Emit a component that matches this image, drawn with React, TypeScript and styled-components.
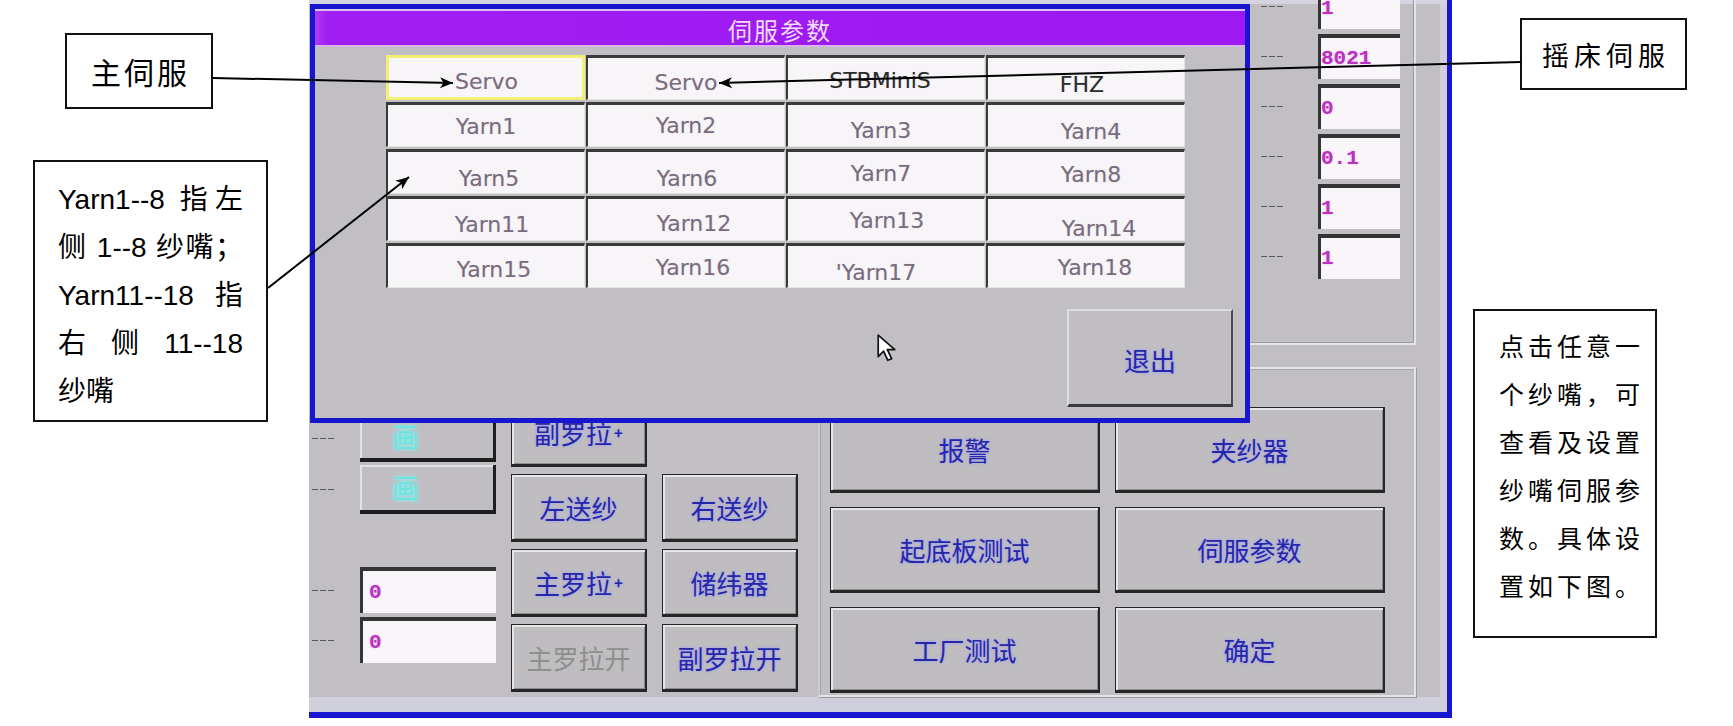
import React from 'react';
import styled, { createGlobalStyle } from 'styled-components';

const GlobalStyle = createGlobalStyle`
  html, body { margin: 0; padding: 0; background: #fff; }
  body { font-family: "Noto Sans CJK SC", sans-serif; }
  * { box-sizing: border-box; }
`;

const BLUE = '#1616cf';
const GRAY = '#c1bfc3';

const Page = styled.div`
  position: relative;
  display: flex;
  width: 1733px;
  height: 726px;
  overflow: hidden;
  background: #fff;
`;

/* ---------- annotations ---------- */

const LeftNotes = styled.div`
  width: 309px;
  flex-shrink: 0;
  display: flex;
  flex-direction: column;
  align-items: flex-start;
  padding-top: 33px;
`;

const RightNotes = styled.div`
  flex: 1;
  display: flex;
  flex-direction: column;
  align-items: flex-start;
  padding-top: 18px;
`;

const NoteBox = styled.div<{ $w: number; $h: number; $ml: number; $mt?: number }>`
  width: ${p => p.$w}px;
  height: ${p => p.$h}px;
  margin-left: ${p => p.$ml}px;
  margin-top: ${p => p.$mt ?? 0}px;
  border: 2px solid #111;
  background: #fff;
  color: #000;
`;

const NoteLabel = styled(NoteBox)<{ $size: number; $ls: number }>`
  display: flex;
  align-items: center;
  justify-content: center;
  font-size: ${p => p.$size}px;
  letter-spacing: ${p => p.$ls}px;
  padding-left: ${p => p.$ls}px;
  font-family: "Noto Sans CJK SC", sans-serif;
`;

const NoteText = styled(NoteBox)`
  padding: 14px 23px 0 23px;
  font-family: "Liberation Sans", "Noto Sans CJK SC", sans-serif;
  font-size: 28px;
  line-height: 48px;
`;

const NoteLine = styled.div<{ $spread?: boolean }>`
  white-space: nowrap;
  text-align: ${p => (p.$spread ? 'justify' : 'left')};
  text-align-last: ${p => (p.$spread ? 'justify' : 'left')};
`;

const TipText = styled(NoteBox)`
  padding: 10px 0 0 24px;
  font-family: "Noto Sans CJK SC", sans-serif;
  font-size: 25px;
  letter-spacing: 4px;
  line-height: 48px;
`;

const ArrowLayer = styled.svg`
  position: absolute;
  left: 0;
  top: 0;
  width: 1733px;
  height: 726px;
  pointer-events: none;
`;

/* ---------- machine screen ---------- */

const Screen = styled.div`
  position: relative;
  width: 1143px;
  height: 718px;
  flex-shrink: 0;
  overflow: hidden;
  background: ${GRAY};
  border-right: 5px solid ${BLUE};
  border-bottom: 6px solid ${BLUE};
  box-shadow: inset 0 4px 0 #d6d4e2, inset -7px 0 0 #d0cfdb, inset 0 -15px 0 #cfcedb,
    inset 0 -13px 0 #dcdce6;
`;

const Panel = styled.div`
  display: flex;
  height: 100%;
`;

const LeftCol = styled.div`
  width: 187px;
  flex-shrink: 0;
  display: flex;
  flex-direction: column;
  padding-top: 415px;
`;

const SideRow = styled.div<{ $mt: number }>`
  display: flex;
  align-items: center;
  margin-top: ${p => p.$mt}px;
  padding-left: 3px;
`;

const Dash = styled.div<{ $w: number; $gap: number }>`
  width: ${p => p.$w}px;
  height: 1px;
  margin-right: ${p => p.$gap}px;
  background: repeating-linear-gradient(90deg, #5a5a5a 0 6px, transparent 6px 8px);
`;

const CyanKey = styled.div<{ $h: number }>`
  width: 136px;
  height: ${p => p.$h}px;
  display: flex;
  align-items: center;
  padding-left: 32px;
  background: #c0bec2;
  border-right: 3px solid #1e1e1e;
  border-bottom: 4px solid #1e1e1e;
  box-shadow: inset 2px 2px 0 #e2e2e4;
  color: rgba(96, 226, 222, 0.7);
  font-size: 27px;
  text-shadow: 0 0 4px #8ff3f0, 0 0 2px #7ee;
`;

const ValueField = styled.div<{ $w: number; $h: number; $pad: number }>`
  width: ${p => p.$w}px;
  height: ${p => p.$h}px;
  display: flex;
  align-items: center;
  padding-left: ${p => p.$pad}px;
  background: #f8f6f8;
  border-top: 4px solid #343434;
  border-left: 3px solid #343434;
  color: #b832bf;
  font-family: "Liberation Mono", monospace;
  font-weight: bold;
  font-size: 21px;
  text-shadow: 0 0 2px #f2a8f2;
`;

const MidCol = styled.div`
  width: 287px;
  margin-left: 15px;
  flex-shrink: 0;
  display: grid;
  grid-template-columns: 136px 136px;
  grid-auto-rows: 68px;
  column-gap: 15px;
  row-gap: 7px;
  align-content: start;
  padding-top: 399px;
`;

const KeyButton = styled.div<{ $muted?: boolean }>`
  display: flex;
  align-items: center;
  justify-content: center;
  background: #bfbdc0;
  border: 1px solid #262626;
  border-right-width: 2px;
  border-bottom-width: 3px;
  box-shadow: inset 2px 2px 0 #e6e6e8, inset -1px -1px 0 #8c8c8c;
  color: ${p => (p.$muted ? '#8e8e8e' : '#2626a8')};
  font-family: "Noto Sans CJK SC", sans-serif;
  font-size: 26px;
  text-shadow: ${p => (p.$muted ? 'none' : '0 0 3px rgba(150, 150, 255, 0.95)')};
`;

const Plus = styled.span`
  font-size: 15px;
  margin-left: 2px;
  font-weight: bold;
`;

const RightCol = styled.div`
  width: 598px;
  margin-left: 20px;
  flex-shrink: 0;
  display: flex;
  flex-direction: column;
`;

const TopGroup = styled.div`
  height: 345px;
  display: flex;
  flex-direction: column;
  align-items: flex-end;
  gap: 5px;
  padding-right: 14px;
  border-right: 2px solid #e4e4e6;
  border-bottom: 2px solid #e4e4e6;
  box-shadow: inset -1px -1px 0 #9c9c9e;
`;

const FieldRow = styled.div<{ $first?: boolean }>`
  display: flex;
  align-items: center;
  margin-top: ${p => (p.$first ? -16 : 0)}px;
`;

const LowerGroup = styled.div`
  margin-top: 22px;
  height: 330px;
  border: 2px solid #e4e4e6;
  border-left-color: #cdcccf;
  box-shadow: inset 1px 1px 0 #a4a4a6, 1px 1px 0 #9c9c9e;
  padding: 38px 29px 0 10px;
  display: grid;
  grid-template-columns: 270px 270px;
  grid-auto-rows: 86px;
  column-gap: 15px;
  row-gap: 14px;
`;

/* ---------- dialog ---------- */

const Dialog = styled.div`
  position: absolute;
  left: 1px;
  top: 4px;
  width: 940px;
  height: 419px;
  border: 5px solid ${BLUE};
  background: ${GRAY};
  display: flex;
  flex-direction: column;
`;

const TitleBar = styled.div`
  height: 38px;
  flex-shrink: 0;
  border-top: 2px solid #dcc2ee;
  border-bottom: 2px solid #d7b4ea;
  background: linear-gradient(90deg, #b03cf2 0, #a01ef4 12px, #9d18f2 100%);
  display: flex;
  align-items: center;
  justify-content: center;
  padding-top: 2px;
  color: #f4ddff;
  font-family: "Noto Sans CJK SC", sans-serif;
  font-size: 24px;
  letter-spacing: 2px;
`;

const DialogBody = styled.div`
  position: relative;
  flex: 1;
  display: flex;
  flex-direction: column;
`;

const CellGrid = styled.div`
  margin: 8px 0 0 71px;
  display: grid;
  grid-template-columns: repeat(4, 199px);
  grid-auto-rows: 45px;
  column-gap: 1px;
  row-gap: 2px;
`;

const Cell = styled.div<{ $focus?: boolean }>`
  display: flex;
  align-items: center;
  justify-content: center;
  background: #f7f5f7;
  border-top: 3px solid ${p => (p.$focus ? '#f1ef74' : '#3a3a3a')};
  border-left: ${p => (p.$focus ? 3 : 2)}px solid ${p => (p.$focus ? '#f1ef74' : '#3a3a3a')};
  border-right: ${p => (p.$focus ? '3px solid #f1ef74' : '1px solid #e4e4e4')};
  border-bottom: ${p => (p.$focus ? '3px solid #f1ef74' : '1px solid #e4e4e4')};
`;

const CellLabel = styled.span<{ $dx: number; $dy: number; $dark?: boolean }>`
  transform: translate(${p => p.$dx}px, ${p => p.$dy}px);
  font-family: "DejaVu Sans", sans-serif;
  font-size: 22px;
  color: ${p => (p.$dark ? '#2c2c2c' : '#7a6c7f')};
  text-shadow: 0 0 1px rgba(140, 120, 150, 0.3);
`;

const ExitButton = styled.div`
  margin: auto 12px 11px auto;
  width: 166px;
  height: 98px;
  display: flex;
  align-items: center;
  justify-content: center;
  padding-top: 4px;
  background: #c0bec2;
  border-top: 2px solid #dedee2;
  border-left: 2px solid #dedee2;
  border-right: 2px solid #4a4a4a;
  border-bottom: 3px solid #3a3a3a;
  color: #2626a8;
  font-family: "Noto Sans CJK SC", sans-serif;
  font-size: 26px;
  text-shadow: 0 0 3px rgba(150, 150, 255, 0.95);
`;

const Cursor = styled.svg`
  position: absolute;
  left: 561px;
  top: 286px;
  width: 28px;
  height: 30px;
`;

type CellData = { label: string; dx: number; dy: number; dark?: boolean; focus?: boolean };

const cells: CellData[] = [
  { label: 'Servo', dx: 1, dy: 4, focus: true },
  { label: 'Servo', dx: 0, dy: 4 },
  { label: 'STBMiniS', dx: -6, dy: 2, dark: true },
  { label: 'FHZ', dx: -4, dy: 6, dark: true },
  { label: 'Yarn1', dx: 0, dy: 1 },
  { label: 'Yarn2', dx: 0, dy: 0 },
  { label: 'Yarn3', dx: -5, dy: 5 },
  { label: 'Yarn4', dx: 5, dy: 6 },
  { label: 'Yarn5', dx: 3, dy: 6 },
  { label: 'Yarn6', dx: 1, dy: 6 },
  { label: 'Yarn7', dx: -5, dy: 1 },
  { label: 'Yarn8', dx: 5, dy: 2 },
  { label: 'Yarn11', dx: 6, dy: 5 },
  { label: 'Yarn12', dx: 8, dy: 4 },
  { label: 'Yarn13', dx: 1, dy: 1 },
  { label: 'Yarn14', dx: 13, dy: 9 },
  { label: 'Yarn15', dx: 8, dy: 3 },
  { label: 'Yarn16', dx: 7, dy: 1 },
  { label: "'Yarn17", dx: -10, dy: 6 },
  { label: 'Yarn18', dx: 9, dy: 1 },
];

const topValues = ['1', '8021', '0', '0.1', '1', '1'];

const Arrows = () => (
  <ArrowLayer viewBox="0 0 1733 726">
    <defs>
      <marker
        id="head"
        markerUnits="userSpaceOnUse"
        markerWidth="16"
        markerHeight="14"
        refX="14"
        refY="7"
        orient="auto"
      >
        <path d="M1,1.5 L14,7 L1,12.5 L4.5,7 Z" fill="#000" />
      </marker>
    </defs>
    <g stroke="#000" strokeWidth="2" fill="none">
      <line x1="213" y1="78" x2="453" y2="83" markerEnd="url(#head)" />
      <line x1="1521" y1="62" x2="719" y2="83" markerEnd="url(#head)" />
      <line x1="268" y1="288" x2="409" y2="177" markerEnd="url(#head)" />
    </g>
  </ArrowLayer>
);

export default function App() {
  return (
    <>
      <GlobalStyle />
      <Page>
        <LeftNotes>
          <NoteLabel $w={148} $h={76} $ml={65} $size={30} $ls={3}>
            主伺服
          </NoteLabel>
          <NoteText $w={235} $h={262} $ml={33} $mt={51}>
            <NoteLine $spread>Yarn1--8 指左</NoteLine>
            <NoteLine $spread>侧 1--8 纱嘴；</NoteLine>
            <NoteLine $spread>Yarn11--18 指</NoteLine>
            <NoteLine $spread>右 侧 11--18</NoteLine>
            <NoteLine>纱嘴</NoteLine>
          </NoteText>
        </LeftNotes>

        <Screen>
          <Panel>
            <LeftCol>
              <SideRow $mt={0}>
                <Dash $w={22} $gap={26} />
                <CyanKey $h={47}>画</CyanKey>
              </SideRow>
              <SideRow $mt={3}>
                <Dash $w={22} $gap={26} />
                <CyanKey $h={49}>画</CyanKey>
              </SideRow>
              <SideRow $mt={53}>
                <Dash $w={22} $gap={26} />
                <ValueField $w={136} $h={46} $pad={6}>0</ValueField>
              </SideRow>
              <SideRow $mt={4}>
                <Dash $w={22} $gap={26} />
                <ValueField $w={136} $h={46} $pad={6}>0</ValueField>
              </SideRow>
            </LeftCol>

            <MidCol>
              <KeyButton>
                副罗拉<Plus>+</Plus>
              </KeyButton>
              <div />
              <KeyButton>左送纱</KeyButton>
              <KeyButton>右送纱</KeyButton>
              <KeyButton>
                主罗拉<Plus>+</Plus>
              </KeyButton>
              <KeyButton>储纬器</KeyButton>
              <KeyButton $muted>主罗拉开</KeyButton>
              <KeyButton>副罗拉开</KeyButton>
            </MidCol>

            <RightCol>
              <TopGroup>
                {topValues.map((v, i) => (
                  <FieldRow key={i} $first={i === 0}>
                    <Dash $w={24} $gap={33} />
                    <ValueField $w={82} $h={45} $pad={0}>
                      {v}
                    </ValueField>
                  </FieldRow>
                ))}
              </TopGroup>
              <LowerGroup>
                <KeyButton>报警</KeyButton>
                <KeyButton>夹纱器</KeyButton>
                <KeyButton>起底板测试</KeyButton>
                <KeyButton>伺服参数</KeyButton>
                <KeyButton>工厂测试</KeyButton>
                <KeyButton>确定</KeyButton>
              </LowerGroup>
            </RightCol>
          </Panel>

          <Dialog>
            <TitleBar>伺服参数</TitleBar>
            <DialogBody>
              <CellGrid>
                {cells.map((c, i) => (
                  <Cell key={i} $focus={c.focus}>
                    <CellLabel $dx={c.dx} $dy={c.dy} $dark={c.dark}>
                      {c.label}
                    </CellLabel>
                  </Cell>
                ))}
              </CellGrid>
              <ExitButton>退出</ExitButton>
              <Cursor viewBox="0 0 26 28">
                <path
                  d="M2,2 L2,22 L7,17 L11,25.5 L14.5,24 L10.5,15.5 L17.5,15.5 Z"
                  fill="#fff"
                  stroke="#111"
                  strokeWidth="1.6"
                  strokeLinejoin="round"
                />
              </Cursor>
            </DialogBody>
          </Dialog>
        </Screen>

        <RightNotes>
          <NoteLabel $w={167} $h={72} $ml={68} $size={27} $ls={5}>
            摇床伺服
          </NoteLabel>
          <TipText $w={184} $h={329} $ml={21} $mt={219}>
            <div>点击任意一</div>
            <div>个纱嘴，可</div>
            <div>查看及设置</div>
            <div>纱嘴伺服参</div>
            <div>数。具体设</div>
            <div>置如下图。</div>
          </TipText>
        </RightNotes>

        <Arrows />
      </Page>
    </>
  );
}
